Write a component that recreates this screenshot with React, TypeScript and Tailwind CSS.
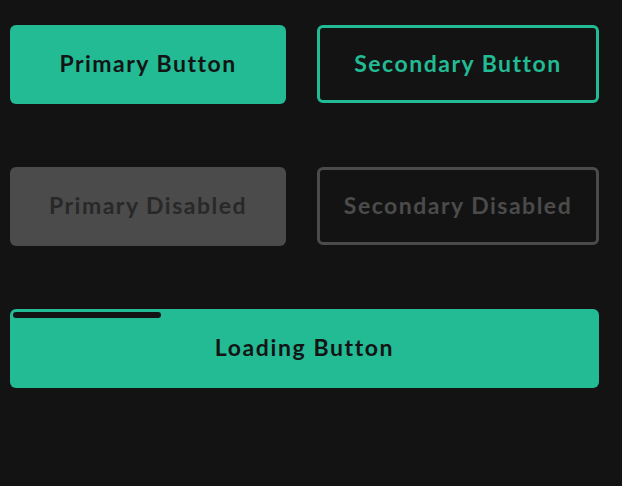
export default function App() {
  return (
    <div className="min-h-[486px] w-[622px] bg-[#131313] pl-[10px] pt-[25px]" style={{ fontFamily: "Lato, 'Noto Sans', sans-serif" }}>
      <div className="grid grid-cols-[276px_282px] gap-x-[31px] gap-y-[63px]">
        <button className="h-[79px] rounded-[6px] bg-[#22bb94] pb-[3px] text-[23px] font-bold tracking-[1.5px] text-[#141414]">Primary Button</button>
        <button className="h-[78px] rounded-[6px] border-[3px] border-[#22bb94] bg-transparent pb-[2px] text-[23px] font-bold tracking-[1.5px] text-[#22bb94]">Secondary Button</button>
        <button disabled className="h-[79px] rounded-[6px] bg-[#4b4b4b] pb-[3px] text-[23px] font-bold tracking-[1.5px] text-[#282828]">Primary Disabled</button>
        <button disabled className="h-[78px] rounded-[6px] border-[3px] border-[#4b4b4b] bg-transparent pb-[2px] text-[23px] font-bold tracking-[1.5px] text-[#4b4b4b]">Secondary Disabled</button>
        <button className="relative col-span-2 h-[79px] rounded-[6px] bg-[#22bb94] pb-[3px] text-[23px] font-bold tracking-[1.6px] text-[#141414]">
          <span className="absolute left-[3px] top-[3px] h-[6px] w-[148px] rounded-full bg-[#131313]" />
          Loading Button
        </button>
      </div>
    </div>
  );
}
